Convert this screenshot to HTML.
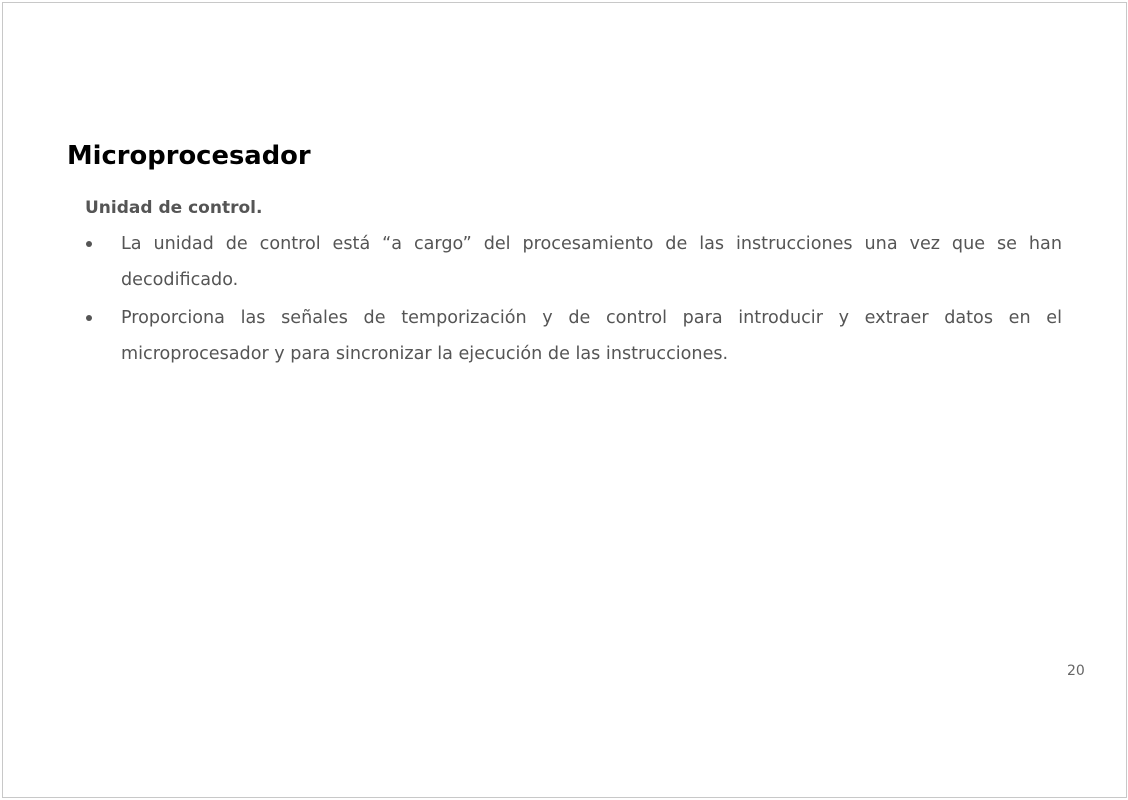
<!DOCTYPE html>
<html><head><meta charset="utf-8"><style>
html,body{margin:0;padding:0;background:#fff;}
body{width:1128px;height:800px;position:relative;overflow:hidden;font-family:"DejaVu Sans","Liberation Sans",sans-serif;}
.frame{position:absolute;left:2px;top:2px;width:1123px;height:794px;border:1px solid #c8c8c8;}
h1{position:absolute;left:67px;top:141px;margin:0;font-weight:bold;font-size:25.8px;color:#000;}
.sub{position:absolute;left:85px;top:198px;font-weight:bold;font-size:17px;color:#555;}
.l{position:absolute;left:121px;width:941px;font-size:17.6px;color:#555;text-align:justify;text-align-last:justify;white-space:nowrap;}
.l.s{text-align-last:left;}
.b{position:absolute;left:86px;width:6px;height:6px;border-radius:50%;background:#555;}
.pg{position:absolute;left:1067px;top:663px;font-size:14px;color:#666;}
</style></head><body>
<div class="frame"></div>
<h1>Microprocesador</h1>
<div class="sub">Unidad de control.</div>
<div class="b" style="top:241px"></div>
<div class="l" style="top:234px;white-space:normal">La unidad de control está “a cargo” del procesamiento de las instrucciones una vez que se han</div>
<div class="l s" style="top:270px">decodificado.</div>
<div class="b" style="top:315px"></div>
<div class="l" style="top:308px;white-space:normal">Proporciona las señales de temporización y de control para introducir y extraer datos en el</div>
<div class="l s" style="top:344px">microprocesador y para sincronizar la ejecución de las instrucciones.</div>
<div class="pg">20</div>
</body></html>
